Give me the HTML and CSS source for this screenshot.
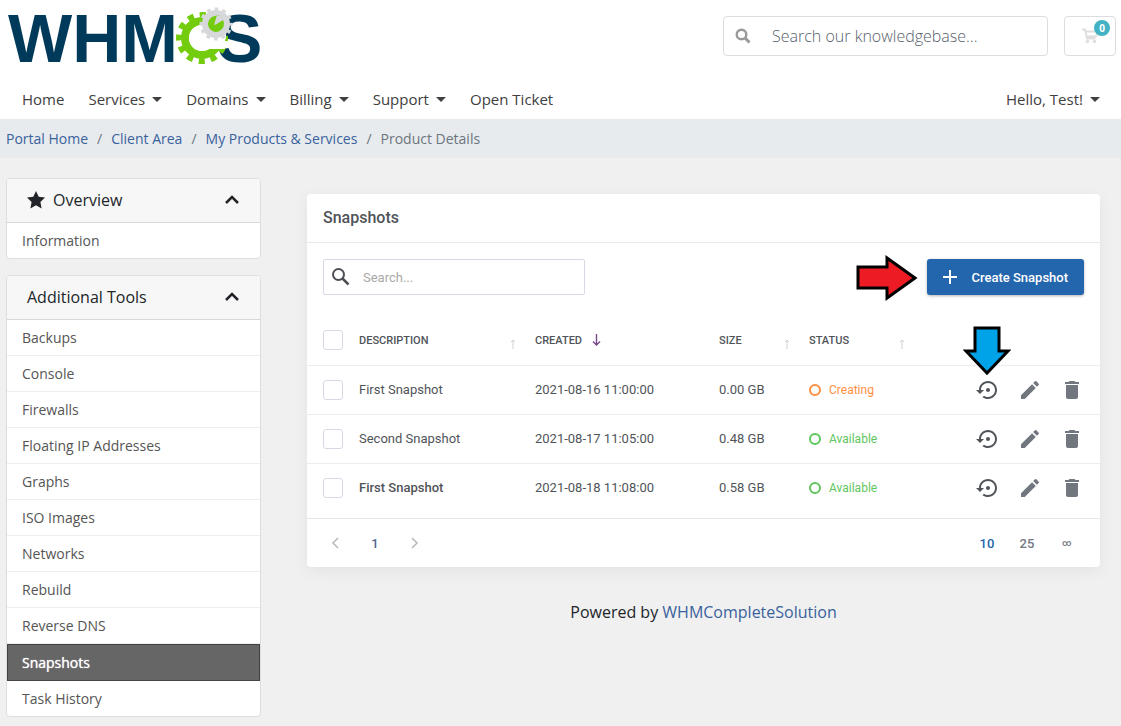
FILE: index.html
```html
<!DOCTYPE html>
<html lang="en">
<head>
<meta charset="utf-8">
<meta name="viewport" content="width=device-width, initial-scale=1">
<title>Product Details - Snapshots</title>
<link rel="stylesheet" href="styles.css">
</head>
<body>
<svg class="defs" aria-hidden="true">
  <symbol id="i-restore" viewBox="0 0 24 24"><path d="M14 12c0-1.100-.9-2-2-2s-2 .9-2 2 .9 2 2 2 2-.9 2-2zm-2-9c-4.970 0-9 4.030-9 9H0l4 4 4-4H5c0-3.870 3.130-7 7-7s7 3.130 7 7-3.130 7-7 7c-1.510 0-2.910-.49-4.060-1.300l-1.420 1.440C8.040 20.300 9.940 21 12 21c4.970 0 9-4.030 9-9s-4.030-9-9-9z"/></symbol>
  <symbol id="i-pencil" viewBox="0 0 24 24"><path d="M3 17.250V21h3.750L17.810 9.940l-3.750-3.750L3 17.250zM20.710 7.040a1 1 0 0 0 0-1.410l-2.340-2.340a1 1 0 0 0-1.410 0l-1.830 1.830 3.750 3.750 1.830-1.830z"/></symbol>
  <symbol id="i-trash" viewBox="0 0 24 24"><path d="M6 19c0 1.100.9 2 2 2h8c1.100 0 2-.9 2-2V7H6v12zM19 4h-3.500l-1-1h-5l-1 1H5v2h14V4z"/></symbol>
  <symbol id="i-up" viewBox="0 0 16 16"><path d="M2 11l6-6 6 6" fill="none" stroke="currentColor" stroke-width="2.500"/></symbol>
  <symbol id="i-sort" viewBox="0 0 8 12"><path d="M4 2v9M2 4l2-2 2 2" fill="none" stroke="currentColor"/></symbol>
</svg>

<header class="header">
  <div class="topbar">
    <a class="logo" href="#" aria-label="WHMCS">
      <svg width="264" height="72" viewBox="8 0 264 72">
        <text class="logo-text" x="8" y="62">WHM</text>
        <text class="logo-text" x="217" y="62">S</text>
        <circle cx="202" cy="38" r="17" fill="none" stroke="#73cc0e" stroke-width="8"/>
        <circle cx="202" cy="38" r="22.500" fill="none" stroke="#73cc0e" stroke-width="7" stroke-dasharray="6 5.780" stroke-dashoffset="3"/>
        <circle cx="202" cy="38" r="13" fill="#fff"/>
        <path d="M204 30h22v8l-1 2v9h-16z" fill="#fff"/>
        <circle cx="216" cy="24" r="14" fill="#d6d8da"/>
        <circle cx="216" cy="24" r="14.500" fill="none" stroke="#d6d8da" stroke-width="4" stroke-dasharray="3.600 3.992" stroke-dashoffset="1.800"/>
        <path d="M215 25l8-5a8 8 0 1 1-8-4l4-1z" fill="#73cc0e"/>
        <path d="M214 25l3-10 7 4z" fill="#d6d8da"/>
      </svg>
    </a>
    <form class="kb-search">
      <svg width="16" height="16" viewBox="0 0 16 16" aria-hidden="true"><circle cx="6.500" cy="6.500" r="4.800" fill="none" stroke="#999" stroke-width="2.400"/><path d="M10 10l4.500 4.500" stroke="#999" stroke-width="3"/></svg>
      <input type="search" aria-label="Search our knowledgebase" placeholder="Search our knowledgebase...">
    </form>
    <a class="cart" href="#" aria-label="Shopping cart">
      <svg width="18" height="16" viewBox="0 0 18 16" aria-hidden="true"><path d="M1 1.500h3l2 9h8.500M4.500 3.500h12l-1.500 5H5.500" fill="none" stroke="#dfdfdf" stroke-width="2"/><circle cx="6.500" cy="13.500" r="1.800" fill="#dfdfdf"/><circle cx="13.500" cy="13.500" r="1.800" fill="#dfdfdf"/></svg>
      <span class="badge">0</span>
    </a>
  </div>
  <nav class="nav" aria-label="Main">
    <a href="#">Home</a>
    <a class="drop" href="#">Services</a>
    <a class="drop" href="#">Domains</a>
    <a class="drop" href="#">Billing</a>
    <a class="drop" href="#">Support</a>
    <a href="#">Open Ticket</a>
    <a class="drop account" href="#">Hello, Test!</a>
  </nav>
</header>

<nav aria-label="Breadcrumb">
  <ol class="breadcrumb">
    <li><a href="#">Portal Home</a></li>
    <li><a href="#">Client Area</a></li>
    <li><a href="#">My Products &amp; Services</a></li>
    <li>Product Details</li>
  </ol>
</nav>

<div class="layout">
  <aside class="sidebar">
    <section class="panel">
      <h2 class="panel-head">
        <svg width="18" height="18" viewBox="0 0 18 18" aria-hidden="true"><path fill="currentColor" d="M9 0l2.700 5.800 6.300.8-4.600 4.400 1.200 6.400L9 14.300l-5.600 3.100L4.600 11 0 6.600l6.300-.8z"/></svg>
        <span>Overview</span>
        <svg class="chev" width="16" height="16" aria-hidden="true"><use href="#i-up"/></svg>
      </h2>
      <a class="item" href="#">Information</a>
    </section>
    <section class="panel">
      <h2 class="panel-head">
        <span>Additional Tools</span>
        <svg class="chev" width="16" height="16" aria-hidden="true"><use href="#i-up"/></svg>
      </h2>
      <a class="item" href="#">Backups</a>
      <a class="item" href="#">Console</a>
      <a class="item" href="#">Firewalls</a>
      <a class="item" href="#">Floating IP Addresses</a>
      <a class="item" href="#">Graphs</a>
      <a class="item" href="#">ISO Images</a>
      <a class="item" href="#">Networks</a>
      <a class="item" href="#">Rebuild</a>
      <a class="item" href="#">Reverse DNS</a>
      <a class="item active" href="#" aria-current="page">Snapshots</a>
      <a class="item" href="#">Task History</a>
    </section>
  </aside>

  <main class="main">
    <section class="card">
      <h1 class="card-title">Snapshots</h1>
      <div class="toolbar">
        <div class="search">
          <svg width="20" height="20" viewBox="0 0 20 20" aria-hidden="true"><circle cx="7.500" cy="7.500" r="5.500" fill="none" stroke="#4c4f54" stroke-width="2"/><path d="M11.500 11.500l6 6" stroke="#4c4f54" stroke-width="2.500"/></svg>
          <input type="search" aria-label="Search snapshots" placeholder="Search...">
        </div>
        <div class="create-wrap">
          <button class="create" type="button">
            <svg width="16" height="16" viewBox="0 0 16 16" aria-hidden="true"><path d="M8 1v14M1 8h14" stroke="#fff" stroke-width="2"/></svg>
            Create Snapshot
          </button>
          <svg class="mark-create" width="62" height="46" viewBox="0 0 62 46" aria-hidden="true"><path d="M2 12h29V3l28 20-28 20V33H2z" fill="#ed1c24" stroke="#000" stroke-width="3"/></svg>
        </div>
      </div>
      <table class="table">
        <colgroup><col class="c-check"><col class="c-desc"><col class="c-created"><col class="c-size"><col class="c-status"><col></colgroup>
        <thead>
          <tr>
            <th><input type="checkbox" aria-label="Select all"></th>
            <th><div class="th">Description <svg class="sort" width="8" height="12" aria-hidden="true"><use href="#i-sort"/></svg></div></th>
            <th aria-sort="descending"><div class="th sorted">Created <svg width="9" height="12" viewBox="0 0 9 12" aria-hidden="true"><path d="M4.500 0v11M1 7.500L4.500 11 8 7.500" fill="none" stroke="#7a4a8c" stroke-width="1.400"/></svg></div></th>
            <th><div class="th">Size <svg class="sort" width="8" height="12" aria-hidden="true"><use href="#i-sort"/></svg></div></th>
            <th><div class="th">Status <svg class="sort" width="8" height="12" aria-hidden="true"><use href="#i-sort"/></svg></div></th>
            <th aria-label="Actions"></th>
          </tr>
        </thead>
        <tbody>
          <tr>
            <td><input type="checkbox" aria-label="Select First Snapshot"></td>
            <td>First Snapshot</td><td>2021-08-16 11:00:00</td><td>0.00 GB</td>
            <td><span class="status creating">Creating</span></td>
            <td><div class="actions">
              <button class="restore" type="button" aria-label="Restore"><svg width="24" height="24"><use href="#i-restore"/></svg>
                <svg class="mark-restore" width="48" height="50" viewBox="0 0 48 50" aria-hidden="true"><path d="M12 2h24v23h9L24 47 3 25h9z" fill="#00a2e8" stroke="#000" stroke-width="3"/></svg></button>
              <button type="button" aria-label="Edit"><svg width="24" height="24"><use href="#i-pencil"/></svg></button>
              <button type="button" aria-label="Delete"><svg width="24" height="24"><use href="#i-trash"/></svg></button>
            </div></td>
          </tr>
          <tr>
            <td><input type="checkbox" aria-label="Select Second Snapshot"></td>
            <td>Second Snapshot</td><td>2021-08-17 11:05:00</td><td>0.48 GB</td>
            <td><span class="status available">Available</span></td>
            <td><div class="actions">
              <button class="restore" type="button" aria-label="Restore"><svg width="24" height="24"><use href="#i-restore"/></svg></button>
              <button type="button" aria-label="Edit"><svg width="24" height="24"><use href="#i-pencil"/></svg></button>
              <button type="button" aria-label="Delete"><svg width="24" height="24"><use href="#i-trash"/></svg></button>
            </div></td>
          </tr>
          <tr>
            <td><input type="checkbox" aria-label="Select First Snapshot"></td>
            <td class="strong">First Snapshot</td><td>2021-08-18 11:08:00</td><td>0.58 GB</td>
            <td><span class="status available">Available</span></td>
            <td><div class="actions">
              <button class="restore" type="button" aria-label="Restore"><svg width="24" height="24"><use href="#i-restore"/></svg></button>
              <button type="button" aria-label="Edit"><svg width="24" height="24"><use href="#i-pencil"/></svg></button>
              <button type="button" aria-label="Delete"><svg width="24" height="24"><use href="#i-trash"/></svg></button>
            </div></td>
          </tr>
        </tbody>
      </table>
      <div class="pager">
        <div class="pages">
          <button type="button" aria-label="Previous page"><svg width="8" height="12" viewBox="0 0 8 12"><path d="M7 1L2 6l5 5" fill="none" stroke="#b9bbbe" stroke-width="1.600"/></svg></button>
          <button type="button" class="current">1</button>
          <button type="button" aria-label="Next page"><svg width="8" height="12" viewBox="0 0 8 12"><path d="M1 1l5 5-5 5" fill="none" stroke="#b9bbbe" stroke-width="1.600"/></svg></button>
        </div>
        <div class="pages">
          <button type="button" class="chosen">10</button>
          <button type="button">25</button>
          <button type="button" class="all">∞</button>
        </div>
      </div>
    </section>
    <p class="powered">Powered by <a href="#">WHMCompleteSolution</a></p>
  </main>
</div>
</body>
</html>
```
FILE: styles.css
```css
* { box-sizing: border-box; }
body {
  margin: 0;
  background: #f0f0f0;
  color: #212529;
  font-family: "Open Sans", sans-serif;
  font-size: 14px;
}
a { color: #3a629c; text-decoration: none; }
button, input { font-family: inherit; }
.defs { position: absolute; width: 0; height: 0; }

/* Header */
.header { background: #fff; padding: 0 5px; }
.topbar { display: flex; align-items: center; gap: 16px; height: 72px; }
.logo { margin-right: auto; }
.logo svg { display: block; margin-left: 3px; overflow: visible; }
.logo-text { font-family: "Liberation Sans", Arial, sans-serif; font-weight: 700; font-size: 68px; fill: #003a5a; }
.kb-search {
  display: flex; align-items: center; flex: 0 1 325px; height: 40px;
  padding-left: 11px; border: 1px solid #ddd; border-radius: 4px;
}
.kb-search input {
  flex: 1; min-width: 0; padding: 0 12px 0 21px; border: 0; outline: 0;
  background: none; font-size: 16px; font-weight: 300;
}
.kb-search input::placeholder { color: #56616b; opacity: 1; }
.cart {
  position: relative; display: flex; align-items: center; justify-content: center;
  width: 52px; height: 40px; border: 1px solid #ddd; border-radius: 4px;
}
.badge {
  position: absolute; top: 3px; right: 5px; width: 16px; height: 16px; border-radius: 50%;
  background: #41b3c5; color: #fff; font-size: 10px; font-weight: 700; line-height: 16px; text-align: center;
}
.nav { display: flex; padding: 7px 4px 0 5px; }
.nav a { display: flex; align-items: center; gap: 7px; height: 40px; padding: 0 12px; color: #404040; font-size: 15px; }
.drop::after { content: ""; border: 5px solid transparent; border-top-color: #404040; border-bottom: 0; }
.nav .account { margin-left: auto; }

.breadcrumb { display: flex; margin: 0; padding: 0 6px; background: #e7ebee; color: #6c757d; line-height: 39px; list-style: none; }
.breadcrumb li + li::before { content: "/"; padding: 0 9px; }

/* Columns */
.layout { display: flex; align-items: flex-start; gap: 46px; padding: 20px 21px 7px 6px; }
.sidebar { display: grid; gap: 16px; flex: 0 0 255px; }
.panel { border: 1px solid #dedede; border-radius: 4px; background: #fff; overflow: hidden; }
.panel-head {
  display: flex; align-items: center; gap: 8px; height: 44px; margin: 0; padding: 0 20px 2px;
  border-bottom: 1px solid #d8d8d8; background: #f7f7f7; font-size: 16px; font-weight: 400;
}
.chev { margin-left: auto; }
.item { display: block; padding: 0 15px; border-bottom: 1px solid #eee; color: #555; line-height: 35px; }
.item:last-child { border-bottom: 0; }
.item.active { border: 1px solid #444; background: #666; color: #fff; padding: 0 14px; text-shadow: 0 0 1px #fff; }

.main { flex: 1; min-width: 0; padding-top: 16px; }
.card {
  border-radius: 4px; background: #fff; color: #505459; font-family: Roboto, sans-serif; font-size: 13px;
  box-shadow: 0 4px 16px rgba(0, 0, 0, 0.06);
}
.card-title { margin: 0; padding: 0 16px; border-bottom: 1px solid #e9e9ec; font-size: 16px; font-weight: 500; line-height: 48px; }
.toolbar { display: flex; justify-content: space-between; padding: 16px 16px 20px; }
.search { display: flex; align-items: center; width: 262px; height: 36px; padding-left: 7px; border: 1px solid #d9d9e6; border-radius: 2px; }
.search input { flex: 1; min-width: 0; padding: 0 8px 0 12px; border: 0; outline: 0; background: none; font-size: 13px; }
.search input::placeholder { color: #a9a9a9; opacity: 1; }
.create-wrap { position: relative; }
.create {
  display: flex; align-items: center; gap: 14px; height: 36px; padding: 0 16px 0 15px; border: 0; border-radius: 3px;
  background: #2466ad; color: #fff; font-size: 13px; font-weight: 500; box-shadow: 0 1px 3px rgba(0, 0, 0, 0.3);
}
.mark-create { position: absolute; right: calc(100% + 9px); top: -4px; }

/* Snapshot table */
.table { width: 100%; table-layout: fixed; border-collapse: collapse; }
.c-check { width: 52px; }
.c-desc { width: 176px; }
.c-created { width: 184px; }
.c-size { width: 90px; }
.c-status { width: 115px; }
.table th, .table td { height: 49px; padding: 0; text-align: left; }
.table th { height: 50px; padding-top: 1px; font-size: 11px; font-weight: 500; text-transform: uppercase; border-bottom: 1px solid #ececef; }
.table tr + tr td { border-top: 1px solid #ececef; }
.table th:first-child, .table td:first-child { padding-left: 16px; }
.th { display: flex; align-items: center; justify-content: space-between; padding-right: 18px; }
.th.sorted { justify-content: flex-start; gap: 10px; }
.sort { margin-top: 8px; color: #d0d0d0; }
.table input { appearance: none; display: block; width: 20px; height: 20px; margin: 0; border: 1px solid #d9d9e6; border-radius: 3px; }
.strong { font-weight: 500; }
.status { display: flex; align-items: center; gap: 8px; font-size: 12px; }
.status::before { content: ""; box-sizing: border-box; width: 12px; height: 12px; border: 2px solid; border-radius: 50%; }
.creating { color: #ff8f3f; }
.available { color: #5fc65f; }
.actions { display: flex; justify-content: flex-end; gap: 18px; padding-right: 16px; }
.actions button { position: relative; padding: 0; border: 0; background: none; color: #72777f; fill: currentColor; }
.actions svg { display: block; }
.actions .restore { color: #505459; }
.actions .mark-restore { position: absolute; bottom: calc(100% + 2px); right: -11px; }

.pager { display: flex; justify-content: space-between; margin-top: 6px; padding: 8px 17px 8px 12px; border-top: 1px solid #e6e6ec; }
.pages { display: flex; gap: 8px; }
.pages button { display: grid; place-items: center; width: 32px; height: 32px; padding: 0; border: 0; background: none; color: #72777f; font-size: 13px; font-weight: 500; }
.pages .current { color: #4d648c; }
.pages .chosen { color: #2466ad; }
.pages .all { font-size: 9px; }
.powered { margin: 33px 0 0; font-size: 16px; line-height: 24px; text-align: center; }
```
